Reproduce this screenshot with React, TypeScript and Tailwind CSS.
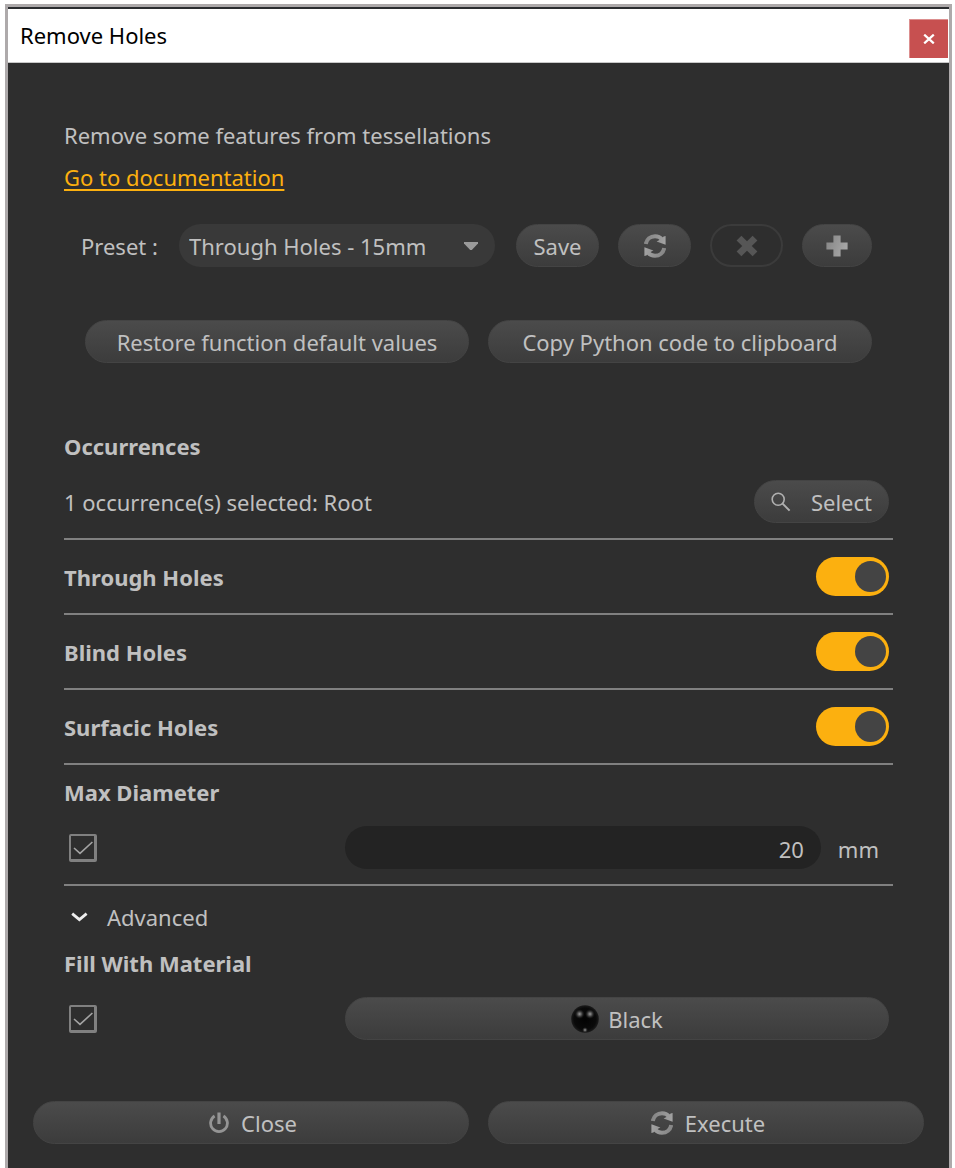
import { useId, useState } from "react";
import type { ButtonHTMLAttributes } from "react";

const pill =
  "flex h-[43px] items-center justify-center rounded-full border border-[#444444] bg-linear-to-b from-[#4b4b4b] to-[#3c3c3c]";

function PillButton({ className = "", ...props }: ButtonHTMLAttributes<HTMLButtonElement>) {
  return <button type="button" className={`${pill} ${className}`} {...props} />;
}

function IconGradient({ id }: { id: string }) {
  return (
    <linearGradient id={id} x1="0" y1="0" x2="1" y2="0.4">
      <stop offset="0" stopColor="#848484" />
      <stop offset="1" stopColor="#a6a6a6" />
    </linearGradient>
  );
}

function RefreshIcon() {
  const id = useId();
  return (
    <svg width="22" height="24" viewBox="0 0 22 24" aria-hidden="true">
      <defs>
        <linearGradient id={id} gradientUnits="userSpaceOnUse" x1="0" y1="6" x2="22" y2="14">
          <stop offset="0" stopColor="#848484" />
          <stop offset="1" stopColor="#a6a6a6" />
        </linearGradient>
      </defs>
      <path d="M1.8 10C2.6 5.2 6.4 2.2 11 2.2C14 2.2 16.4 3.4 18 5.4" fill="none" stroke={`url(#${id})`} strokeWidth="4" />
      <path d="M21.6 2V10.8L12.6 7.6L16.8 5.2L19.6 2.4Z" fill={`url(#${id})`} />
      <g transform="rotate(180 11 12)">
        <path d="M1.8 10C2.6 5.2 6.4 2.2 11 2.2C14 2.2 16.4 3.4 18 5.4" fill="none" stroke={`url(#${id})`} strokeWidth="4" />
        <path d="M21.6 2V10.8L12.6 7.6L16.8 5.2L19.6 2.4Z" fill={`url(#${id})`} />
      </g>
    </svg>
  );
}

function CrossIcon() {
  return (
    <svg width="22" height="22" viewBox="0 0 22 22" aria-hidden="true">
      <path d="M5.4 0.8L11 6.2L16.6 0.8L21.4 5.4L15.8 11L21.4 16.6L16.6 21.2L11 15.8L5.4 21.2L0.6 16.6L6.2 11L0.6 5.4Z" fill="#565656" />
    </svg>
  );
}

function PlusIcon() {
  const id = useId();
  return (
    <svg width="22" height="22" viewBox="0 0 22 22" aria-hidden="true">
      <defs>
        <IconGradient id={id} />
      </defs>
      <path d="M7.4 0.4H14.6V7.4H21.6V14.6H14.6V21.6H7.4V14.6H0.4V7.4H7.4Z" fill={`url(#${id})`} />
    </svg>
  );
}

function PowerIcon() {
  return (
    <svg width="20" height="22" viewBox="0 0 20 22" fill="none" stroke="#949494" strokeWidth="2.8" aria-hidden="true">
      <path d="M5.6 4A8.4 8.4 0 1 0 14.4 4" />
      <path d="M10 0.5V12" strokeWidth="3.2" />
    </svg>
  );
}

function SearchIcon() {
  return (
    <svg width="20" height="20" viewBox="0 0 20 20" fill="none" stroke="#b0b0b0" aria-hidden="true">
      <circle cx="7.2" cy="7.2" r="6" strokeWidth="1.6" />
      <path d="M11.6 11.6L18.6 18.6" strokeWidth="2" />
    </svg>
  );
}

function MaterialBall() {
  const id = useId();
  return (
    <svg width="28" height="28" viewBox="0 0 28 28" aria-hidden="true">
      <defs>
        <radialGradient id={`${id}b`}>
          <stop offset="0" stopColor="#020202" />
          <stop offset="0.8" stopColor="#0a0a0a" />
          <stop offset="1" stopColor="#1c1c1c" />
        </radialGradient>
        <radialGradient id={`${id}s`}>
          <stop offset="0" stopColor="#9a9a9a" />
          <stop offset="0.4" stopColor="#505050" />
          <stop offset="1" stopColor="#1a1a1a" stopOpacity="0" />
        </radialGradient>
      </defs>
      <circle cx="14" cy="14" r="13.8" fill={`url(#${id}b)`} />
      <circle cx="8.6" cy="9" r="5" fill={`url(#${id}s)`} />
      <circle cx="19" cy="9" r="5" fill={`url(#${id}s)`} />
      <circle cx="14" cy="25" r="3" fill={`url(#${id}s)`} />
    </svg>
  );
}

function ToggleRow({ label }: { label: string }) {
  const id = useId();
  const [on, setOn] = useState(true);
  return (
    <div className="flex h-[75px] items-center justify-between border-b-2 border-[#808080] pr-1">
      <label htmlFor={id} className="font-bold">
        {label}
      </label>
      <input
        id={id}
        type="checkbox"
        role="switch"
        checked={on}
        onChange={(e) => setOn(e.target.checked)}
        className="flex h-[39px] w-[73px] appearance-none items-center rounded-full bg-[#555555] px-[3px] before:size-[31px] before:rounded-full before:bg-[#444444] checked:justify-end checked:bg-[#fcb00f]"
      />
    </div>
  );
}

function TickBox({ label }: { label: string }) {
  const [on, setOn] = useState(true);
  return (
    <span className="ml-[5px] grid size-7">
      <input
        type="checkbox"
        aria-label={label}
        checked={on}
        onChange={(e) => setOn(e.target.checked)}
        className="peer col-start-1 row-start-1 size-7 appearance-none rounded-xs border-2 border-r-3 border-b-3 border-[#808080]"
      />
      <svg
        viewBox="0 0 28 28"
        className="pointer-events-none invisible col-start-1 row-start-1 size-7 peer-checked:visible"
        fill="none"
        stroke="#a4a4a4"
        strokeWidth="1.6"
        aria-hidden="true"
      >
        <path d="M5 14L11 19.4L23.4 8" />
      </svg>
    </span>
  );
}

export default function App() {
  const [diameter, setDiameter] = useState("20");
  const [open, setOpen] = useState(true);

  return (
    <div className="flex min-h-screen flex-col bg-white pt-1 pr-[3px] pl-[5px] font-['Noto_Sans','Segoe_UI',sans-serif] text-[22px] leading-[30px] text-[#c0c0c0]">
      <div className="flex grow flex-col border-x-3 border-t-3 border-[#aeaaab] bg-[#2e2e2e]">
        <header className="flex h-14 items-end justify-between border-t-2 border-b border-t-[#2b2d30] border-b-[#c8c8c8] bg-white pr-px pb-1 pl-3 text-black">
          <h1 className="pb-2">Remove Holes</h1>
          <button type="button" aria-label="Close window" className="flex h-[39px] w-[39px] items-center justify-center border-t border-l border-[#dc8f8f] bg-[#c75050]">
            <svg width="12" height="10" viewBox="0 0 12 10" stroke="#ffffff" strokeWidth="2.2" aria-hidden="true">
              <path d="M1.2 0.6L10.8 9.4M10.8 0.6L1.2 9.4" />
            </svg>
          </button>
        </header>

        <main className="px-14 pt-[57px]">
          <p>Remove some features from tessellations</p>
          <a href="#documentation" className="mt-3 inline-block text-[#fcb00f] underline decoration-2 underline-offset-3">
            Go to documentation
          </a>

          <div className="mt-8 flex items-center pr-[21px] pl-[17px]">
            <label htmlFor="preset" className="w-[98px] shrink-0">
              Preset :
            </label>
            <div className="grid grow items-center">
              <select id="preset" className="col-start-1 row-start-1 h-[43px] w-full appearance-none rounded-full bg-[#393939] pr-10 pl-[10px]">
                <option>Through Holes - 15mm</option>
              </select>
              <svg width="14" height="8" viewBox="0 0 14 8" className="pointer-events-none col-start-1 row-start-1 mr-[17px] justify-self-end" aria-hidden="true">
                <path d="M0 0H14V1.5L7.8 8H6.2L0 1.5Z" fill="#9a9a9a" />
              </svg>
            </div>
            <PillButton className="ml-[21px] w-[83px]">Save</PillButton>
            <PillButton className="ml-[19px] w-[73px]" aria-label="Reload preset">
              <RefreshIcon />
            </PillButton>
            <button type="button" disabled aria-label="Delete preset" className="ml-[19px] flex h-[43px] w-[73px] items-center justify-center rounded-full border-2 border-[#3b3b3b]">
              <CrossIcon />
            </button>
            <PillButton className="ml-[19px] w-[70px]" aria-label="Add preset">
              <PlusIcon />
            </PillButton>
          </div>

          <div className="mt-[53px] grid grid-cols-2 gap-[19px] pr-[21px] pl-[21px]">
            <PillButton>Restore function default values</PillButton>
            <PillButton>Copy Python code to clipboard</PillButton>
          </div>

          <section className="mt-[68px] border-b-2 border-[#808080] pb-[15px]">
            <h2 className="font-bold">Occurrences</h2>
            <div className="mt-[19px] flex items-center justify-between pr-1">
              <p>1 occurrence(s) selected: Root</p>
              <PillButton className="w-[135px] gap-5">
                <SearchIcon />
                <span>Select</span>
              </PillButton>
            </div>
          </section>

          <ToggleRow label="Through Holes" />
          <ToggleRow label="Blind Holes" />
          <ToggleRow label="Surfacic Holes" />

          <section className="border-b-2 border-[#808080] pt-3 pb-[15px]">
            <h2 className="font-bold">Max Diameter</h2>
            <div className="mt-[19px] grid grid-cols-[281px_1fr] items-center">
              <TickBox label="Limit diameter" />
              <div className="flex items-center gap-[17px] pr-[14px]">
                <input
                  type="text"
                  aria-label="Max Diameter"
                  value={diameter}
                  onChange={(e) => setDiameter(e.target.value)}
                  className="h-[43px] min-w-0 grow rounded-full bg-[#232323] pt-[2px] pr-[17px] text-right"
                />
                <span className="pt-[2px]">mm</span>
              </div>
            </div>
          </section>

          <button type="button" aria-expanded={open} onClick={() => setOpen(!open)} className="mt-4 flex items-center gap-[19px] pl-[7px]">
            <svg width="17" height="11" viewBox="0 0 17 11" fill="none" stroke="#eeeeee" strokeWidth="2.8" aria-hidden="true">
              <path d="M1.2 1.6L8.4 7.6L15.6 1.6" />
            </svg>
            Advanced
          </button>

          {open && (
            <section className="mt-4">
              <h2 className="font-bold">Fill With Material</h2>
              <div className="mt-[19px] grid grid-cols-[281px_1fr] items-center pr-1">
                <TickBox label="Fill with material" />
                <PillButton className="gap-[9px]">
                  <MaterialBall />
                  <span>Black</span>
                </PillButton>
              </div>
            </section>
          )}
        </main>

        <footer className="mt-auto grid grid-cols-2 gap-[19px] px-[25px] pt-10 pb-6">
          <PillButton className="gap-3 pl-1">
            <PowerIcon />
            <span>Close</span>
          </PillButton>
          <PillButton className="gap-3 pl-1">
            <RefreshIcon />
            <span>Execute</span>
          </PillButton>
        </footer>
      </div>
    </div>
  );
}
